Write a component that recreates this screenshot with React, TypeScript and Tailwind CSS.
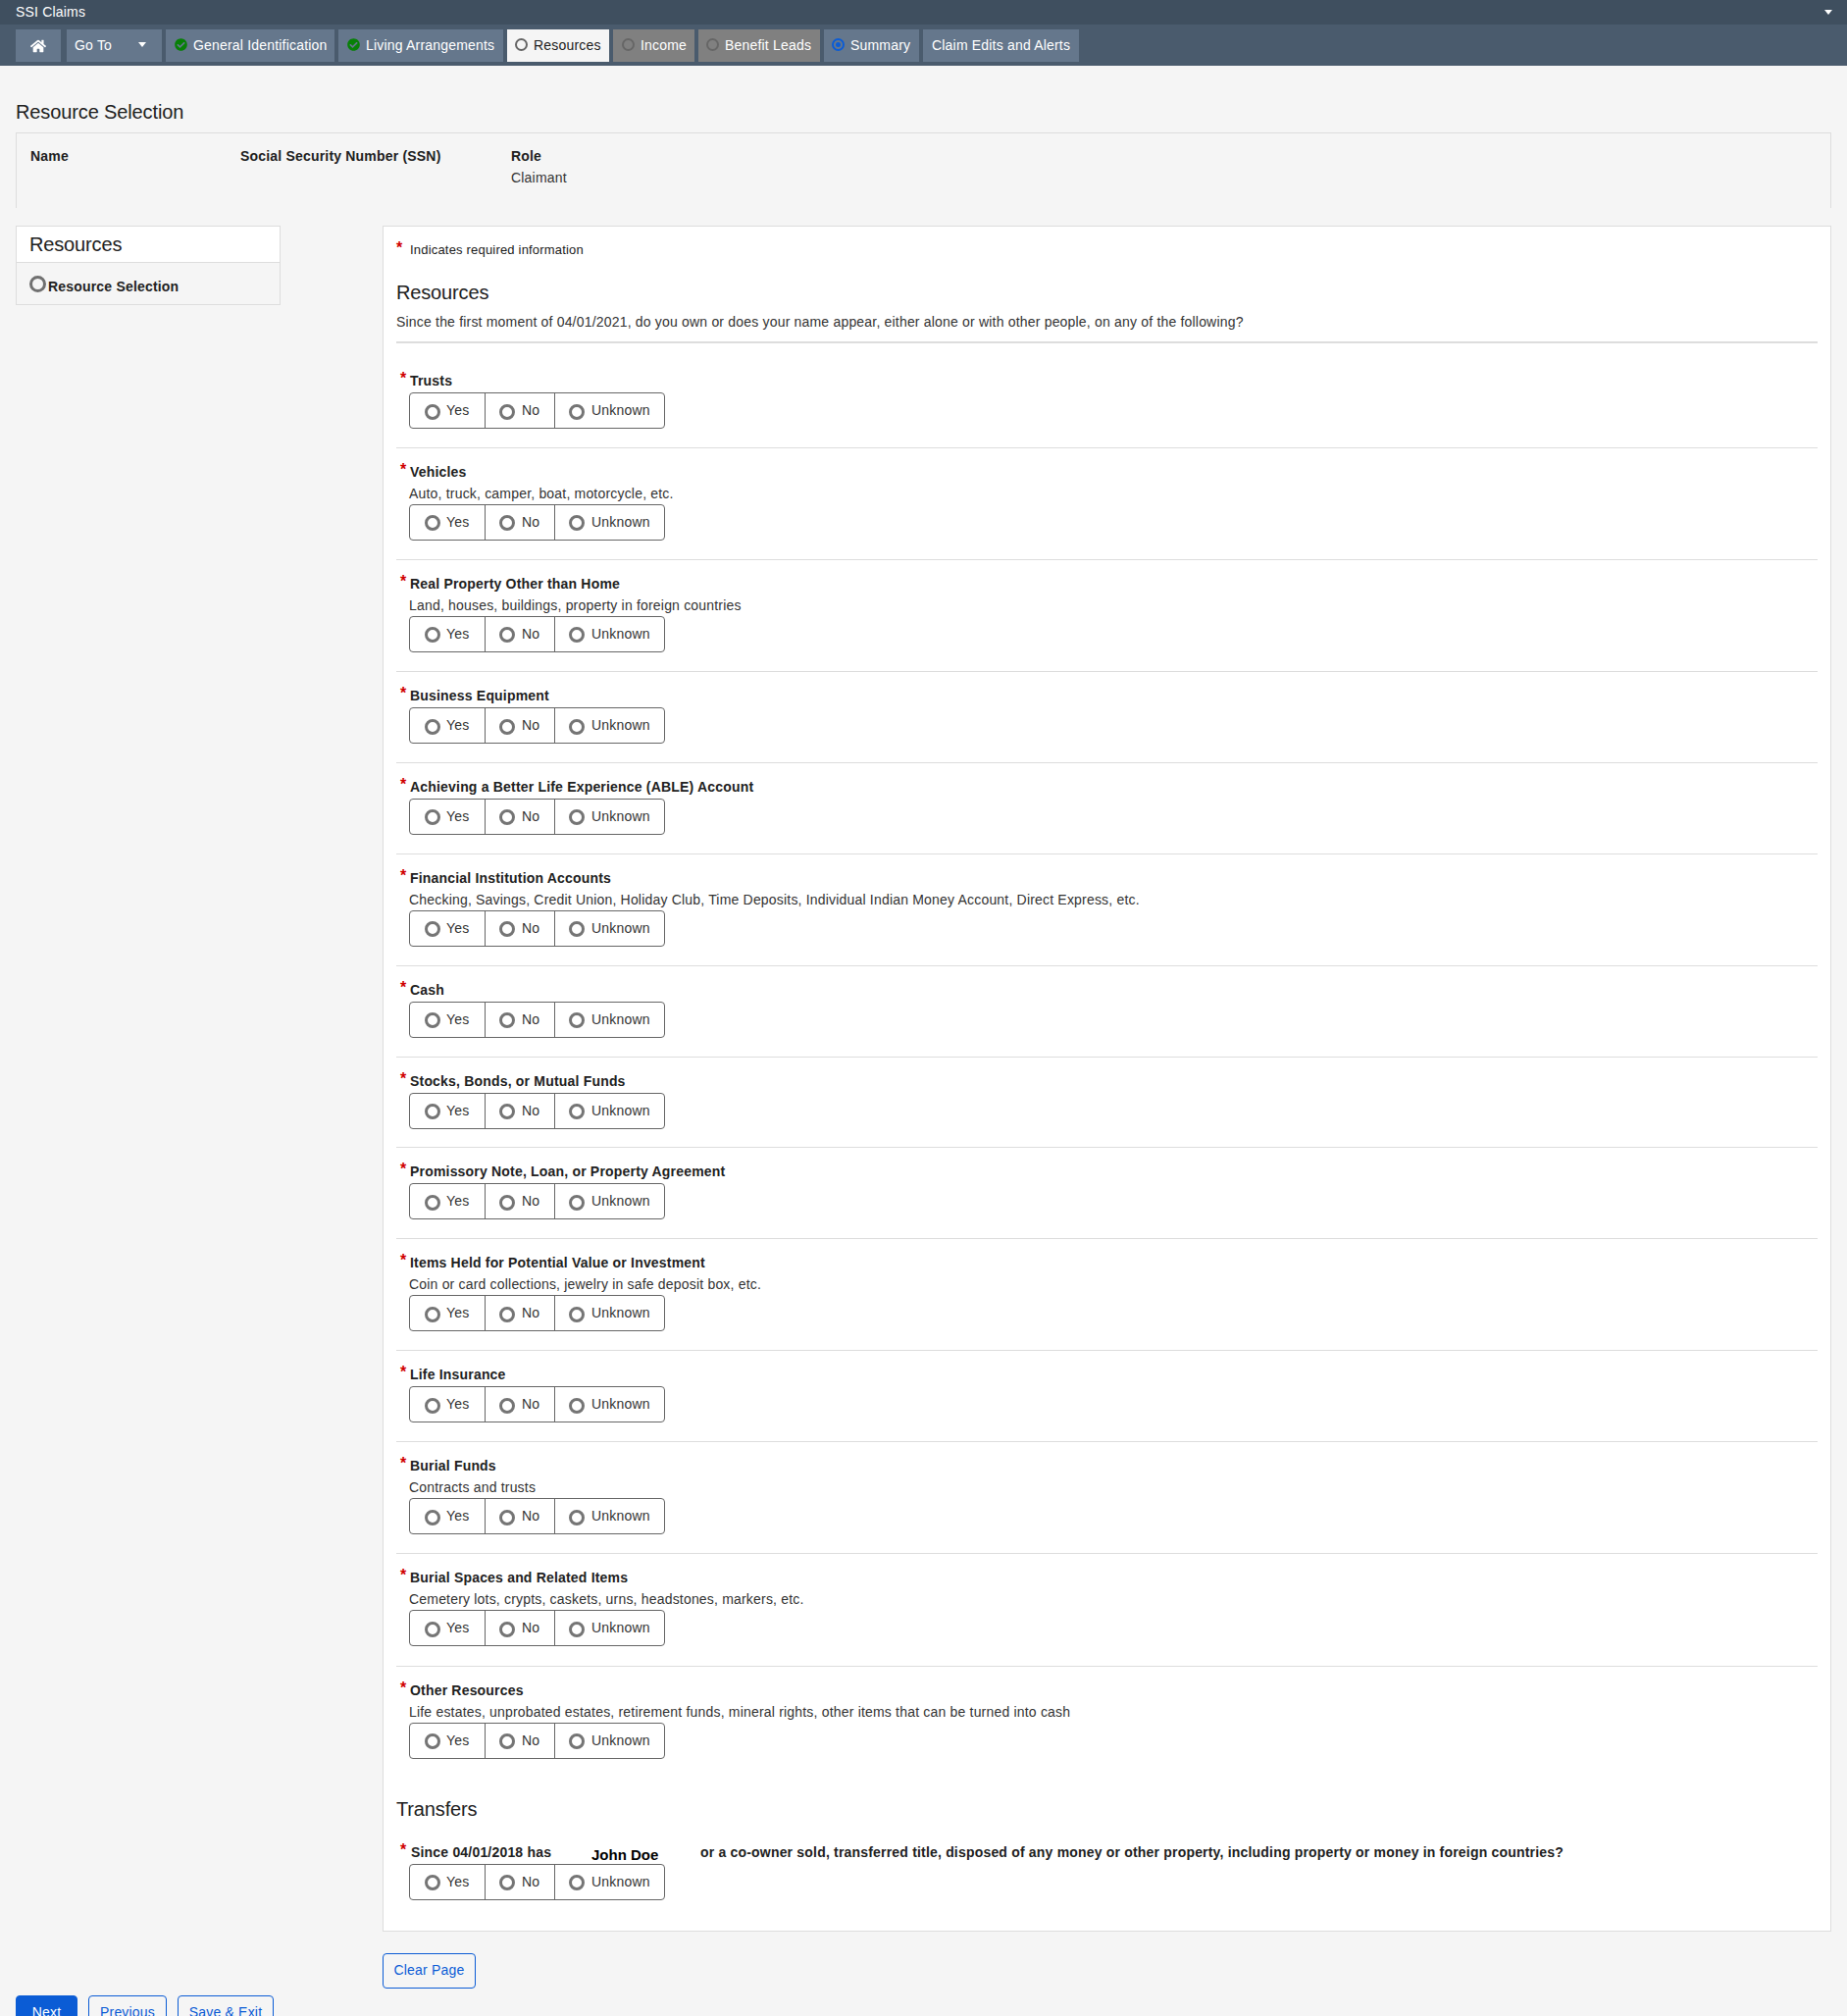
import React from 'react';
import { FaHome, FaCheckCircle } from 'react-icons/fa';

const questions = [
    { label: 'Trusts' },
    { label: 'Vehicles', desc: 'Auto, truck, camper, boat, motorcycle, etc.' },
    { label: 'Real Property Other than Home', desc: 'Land, houses, buildings, property in foreign countries' },
    { label: 'Business Equipment' },
    { label: 'Achieving a Better Life Experience (ABLE) Account' },
    { label: 'Financial Institution Accounts', desc: 'Checking, Savings, Credit Union, Holiday Club, Time Deposits, Individual Indian Money Account, Direct Express, etc.' },
    { label: 'Cash' },
    { label: 'Stocks, Bonds, or Mutual Funds' },
    { label: 'Promissory Note, Loan, or Property Agreement' },
    { label: 'Items Held for Potential Value or Investment', desc: 'Coin or card collections, jewelry in safe deposit box, etc.' },
    { label: 'Life Insurance' },
    { label: 'Burial Funds', desc: 'Contracts and trusts' },
    { label: 'Burial Spaces and Related Items', desc: 'Cemetery lots, crypts, caskets, urns, headstones, markers, etc.' },
    { label: 'Other Resources', desc: 'Life estates, unprobated estates, retirement funds, mineral rights, other items that can be turned into cash' },
];

const Radio = () => (
    <span className="w-4 h-4 mt-[2px] rounded-full border-[3px] border-[#757575] bg-white inline-block shrink-0" />
);

const RadioGroup = () => (
    <div className="flex w-[261px] h-[37px] border border-[#666] rounded-[4px] bg-white text-[14px] text-[#333]">
        <div className="w-[77px] border-r border-[#666] flex items-center pl-[15px] gap-[6px]">
            <Radio />
            <span>Yes</span>
        </div>
        <div className="w-[71px] border-r border-[#666] flex items-center pl-[14px] gap-[7px]">
            <Radio />
            <span>No</span>
        </div>
        <div className="flex-1 flex items-center pl-[14px] gap-[7px]">
            <Radio />
            <span>Unknown</span>
        </div>
    </div>
);

const Star = () => (
    <span className="absolute left-[-9px] top-[-2px] text-[#d00000] font-bold text-[16px]">*</span>
);

const Question: React.FC<{ label: string; desc?: string; last?: boolean }> = ({ label, desc, last }) => (
    <div className={`pt-[14px] pl-[13px] ${last ? '' : desc ? 'pb-[19.3px] border-b border-[#ddd]' : 'pb-[18.7px] border-b border-[#ddd]'}`}>
        <div className="relative pl-px h-[22px] leading-[20px] text-[14px] font-bold text-[#212121]">
            <Star />
            {label}
        </div>
        {desc && <div className="h-[21px] leading-[20px] text-[14px] text-[#333]">{desc}</div>}
        <RadioGroup />
    </div>
);

const Tab: React.FC<{ children: React.ReactNode; className: string; icon?: React.ReactNode }> = ({ children, className, icon }) => (
    <div className={`h-[33px] flex items-center text-[14px] ${className}`}>
        {icon}
        <span>{children}</span>
    </div>
);

const NavDone = () => <FaCheckCircle className="text-[#078007] -mt-[2px] mr-[6px]" size={13} />;
const NavRing = () => <span className="w-[13px] h-[13px] rounded-full border-2 border-[#666] -mt-[2px] mr-[6px]" />;

const App: React.FC = () => {
    return (
        <div className="h-[2055px] overflow-hidden bg-[#f5f5f5] font-['Liberation_Sans',Arial,sans-serif] text-[#333] tracking-[0.19px]">
            <div className="h-[25px] bg-[#3f4f5f] text-white text-[14px] flex items-center justify-between pl-4 pr-[15px]">
                <span>SSI Claims</span>
                <span className="w-0 h-0 border-l-[4px] border-r-[4px] border-t-[5px] border-l-transparent border-r-transparent border-t-white" />
            </div>
            <div className="h-[42px] bg-[#4a5b6d] pt-[5px] pl-4 flex">
                <Tab className="bg-[#65778c] text-white w-[46px] justify-center mr-[6px]"><FaHome size={16} className="block" /></Tab>
                <Tab className="bg-[#65778c] text-white w-[97px] pl-2 mr-1 relative">
                    Go To
                    <span className="absolute right-[16px] top-[13px] w-0 h-0 border-l-[4px] border-r-[4px] border-t-[5px] border-l-transparent border-r-transparent border-t-white" />
                </Tab>
                <Tab className="bg-[#65778c] text-white w-[172px] pl-[9px] mr-1" icon={<NavDone />}>General Identification</Tab>
                <Tab className="bg-[#65778c] text-white w-[168px] pl-[9px] mr-1" icon={<NavDone />}>Living Arrangements</Tab>
                <Tab className="bg-[#f5f5f5] text-[#212121] w-[104px] pl-2 mr-1" icon={<NavRing />}>Resources</Tab>
                <Tab className="bg-[#808080] text-white w-[83px] pl-[9px] mr-1" icon={<NavRing />}>Income</Tab>
                <Tab className="bg-[#808080] text-white w-[124px] pl-2 mr-1" icon={<NavRing />}>Benefit Leads</Tab>
                <Tab className="bg-[#65778c] text-white w-[97px] pl-2 mr-1" icon={
                    <span className="w-[13px] h-[13px] rounded-full border-2 border-[#0b5cd5] -mt-[2px] mr-[6px] flex items-center justify-center">
                        <span className="w-[5px] h-[5px] rounded-full bg-[#0b5cd5]" />
                    </span>
                }>Summary</Tab>
                <Tab className="bg-[#65778c] text-white w-[159px] pl-[9px]">Claim Edits and Alerts</Tab>
            </div>

            <div className="px-4">
                <h1 className="mt-[33px] h-[35px] leading-[28px] text-[20px] text-[#212121] tracking-[-0.12px]">Resource Selection</h1>
                <div className="h-[77px] border border-b-0 border-[#ddd] pl-[14px] pt-[12px] flex text-[14px] leading-[22px]">
                    <div className="w-[214px] font-bold text-[#212121]">Name</div>
                    <div className="w-[276px] font-bold text-[#212121]">Social Security Number (SSN)</div>
                    <div>
                        <div className="font-bold text-[#212121]">Role</div>
                        <div>Claimant</div>
                    </div>
                </div>

                <div className="flex mt-[18px]">
                    <div className="w-[270px] shrink-0 mr-[104px]">
                        <div className="border border-[#ddd]">
                            <div className="bg-white h-[37px] pl-[13px] text-[20px] leading-[37px] text-[#212121] border-b border-[#ddd] tracking-[-0.15px]">Resources</div>
                            <div className="h-[42px] pl-[13px] flex items-center text-[14px] font-bold text-[#212121]">
                                <span className="w-[17px] h-[17px] rounded-full border-[3px] border-[#707070]" />
                                <span className="mt-[7px] ml-[2px]">Resource Selection</span>
                            </div>
                        </div>
                    </div>

                    <div className="flex-1">
                        <div className="bg-white border border-[#ddd] px-[13px] pb-[31px]">
                            <div className="relative pt-[14px] pl-[14px] h-[52px] text-[13px] leading-[20px] text-[#212121]">
                                <span className="absolute left-0 top-[12px] text-[#d00000] font-bold text-[16px]">*</span>
                                Indicates required information
                            </div>
                            <h2 className="h-[30px] text-[20px] leading-[30px] text-[#212121] tracking-[-0.15px]">Resources</h2>
                            <p className="mt-1 h-[22px] text-[14px] leading-[22px] text-[#333]">Since the first moment of 04/01/2021, do you own or does your name appear, either alone or with other people, on any of the following?</p>
                            <div className="border-b-2 border-[#ddd] mt-[9px] mb-[14px]" />
                            {questions.map((q, i) => <Question key={i} label={q.label} desc={q.desc} last={i === questions.length - 1} />)}
                            <h2 className="mt-[36px] h-[30px] text-[20px] leading-[30px] text-[#212121] tracking-[-0.15px]">Transfers</h2>
                            <div className="pt-[19px] pl-[13px]">
                                <div className="relative pl-[2px] h-[22px] leading-[20px] text-[14px] font-bold text-[#212121] flex">
                                    <Star />
                                    <span className="w-[184px]">Since 04/01/2018 has</span>
                                    <span className="w-[111px] text-[15px] text-black tracking-normal mt-[3px]">John Doe</span>
                                    <span>or a co-owner sold, transferred title, disposed of any money or other property, including property or money in foreign countries?</span>
                                </div>
                                <RadioGroup />
                            </div>
                        </div>
                        <button className="mt-[22px] h-[36px] w-[95px] border border-[#0b5cd5] rounded-[4px] text-[#0b5cd5] text-[14px]">Clear Page</button>
                    </div>
                </div>

                <div className="flex mt-[7px] gap-[11px]">
                    <button className="h-[36px] w-[63px] bg-[#0b5cd5] border border-[#0b5cd5] rounded-[4px] text-white text-[14px]">Next</button>
                    <button className="h-[36px] w-[80px] border border-[#0b5cd5] rounded-[4px] text-[#0b5cd5] text-[14px]">Previous</button>
                    <button className="h-[36px] w-[98px] border border-[#0b5cd5] rounded-[4px] text-[#0b5cd5] text-[14px]">Save &amp; Exit</button>
                </div>
            </div>
        </div>
    );
};

export default App;
